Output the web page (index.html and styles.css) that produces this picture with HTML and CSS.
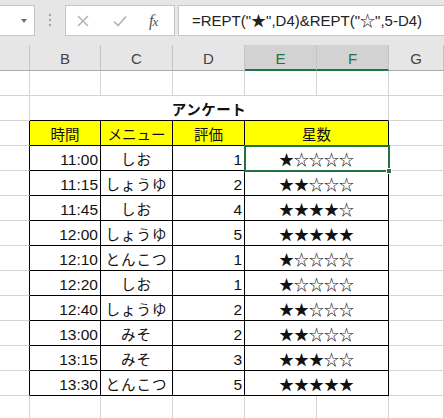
FILE: index.html
```html
<!DOCTYPE html>
<html>
<head>
    <title>アンケート集計</title>
    <link rel="stylesheet" href="styles.css">
</head>
<body>
    <div class="bar">
        <div class="name-box"><span class="caret"></span></div>
        <svg class="grip" width="4" height="14" viewBox="0 0 4 14">
            <circle cx="2" cy="2" r="1.2"/><circle cx="2" cy="7" r="1.2"/><circle cx="2" cy="12" r="1.2"/>
        </svg>
        <div class="fx-box">
            <svg class="ico" width="14" height="14" viewBox="0 0 14 14">
                <path d="M2 2 L12 12 M12 2 L2 12"/>
            </svg>
            <svg class="ico" width="16" height="14" viewBox="0 0 16 14">
                <path d="M2 7.5 L6 11.5 L14 2.5"/>
            </svg>
            <span class="fx">f<i>x</i></span>
        </div>
        <div class="formula">=REPT("★",D4)&amp;REPT("☆",5-D4)</div>
    </div>

    <div class="sheet">
        <!-- column headers -->
        <div class="hd"></div>
        <div class="hd">B</div>
        <div class="hd">C</div>
        <div class="hd">D</div>
        <div class="hd sel">E</div>
        <div class="hd sel">F</div>
        <div class="hd">G</div>

        <!-- row 1 -->
        <div class="c"></div><div class="c"></div><div class="c"></div><div class="c"></div>
        <div class="c"></div><div class="c"></div><div class="c"></div>

        <!-- row 2: title -->
        <div class="c"></div>
        <div class="c title">アンケート</div>
        <div class="c"></div>

        <!-- row 3: table head -->
        <div class="c edge"></div>
        <div class="c t head">時間</div>
        <div class="c t head">メニュー</div>
        <div class="c t head">評価</div>
        <div class="c t head wide">星数</div>
        <div class="c"></div>

        <div class="c edge"></div>
        <div class="c t num">11:00</div><div class="c t mid">しお</div><div class="c t num">1</div>
        <div class="c t wide stars active">★☆☆☆☆<span class="handle"></span></div>
        <div class="c"></div>

        <div class="c edge"></div>
        <div class="c t num">11:15</div><div class="c t mid">しょうゆ</div><div class="c t num">2</div>
        <div class="c t wide stars">★★☆☆☆</div>
        <div class="c"></div>

        <div class="c edge"></div>
        <div class="c t num">11:45</div><div class="c t mid">しお</div><div class="c t num">4</div>
        <div class="c t wide stars">★★★★☆</div>
        <div class="c"></div>

        <div class="c edge"></div>
        <div class="c t num">12:00</div><div class="c t mid">しょうゆ</div><div class="c t num">5</div>
        <div class="c t wide stars">★★★★★</div>
        <div class="c"></div>

        <div class="c edge"></div>
        <div class="c t num">12:10</div><div class="c t mid">とんこつ</div><div class="c t num">1</div>
        <div class="c t wide stars">★☆☆☆☆</div>
        <div class="c"></div>

        <div class="c edge"></div>
        <div class="c t num">12:20</div><div class="c t mid">しお</div><div class="c t num">1</div>
        <div class="c t wide stars">★☆☆☆☆</div>
        <div class="c"></div>

        <div class="c edge"></div>
        <div class="c t num">12:40</div><div class="c t mid">しょうゆ</div><div class="c t num">2</div>
        <div class="c t wide stars">★★☆☆☆</div>
        <div class="c"></div>

        <div class="c edge"></div>
        <div class="c t num">13:00</div><div class="c t mid">みそ</div><div class="c t num">2</div>
        <div class="c t wide stars">★★☆☆☆</div>
        <div class="c"></div>

        <div class="c edge"></div>
        <div class="c t num">13:15</div><div class="c t mid">みそ</div><div class="c t num">3</div>
        <div class="c t wide stars">★★★☆☆</div>
        <div class="c"></div>

        <div class="c edge"></div>
        <div class="c t num">13:30</div><div class="c t mid">とんこつ</div><div class="c t num">5</div>
        <div class="c t wide stars">★★★★★</div>
        <div class="c"></div>

        <!-- row 14 -->
        <div class="c"></div><div class="c"></div><div class="c"></div><div class="c"></div>
        <div class="c"></div><div class="c"></div><div class="c"></div>
    </div>
</body>
</html>
```

FILE: styles.css
```css
* { box-sizing: border-box; }
body { margin: 0; background: #fff; font-family: "Liberation Sans", "Noto Sans CJK JP", sans-serif; overflow: hidden; }

/* formula bar */
.bar { display: flex; align-items: flex-start; height: 45px; padding-top: 5px; background: #e6e6e6; }
.name-box { position: relative; width: 35px; height: 31px; background: #fff; border: 1px solid #c6c6c6; border-left: none; }
.caret { position: absolute; left: 21px; top: 13px; border-left: 3.5px solid transparent; border-right: 3.5px solid transparent; border-top: 4px solid #707070; }
.grip { margin: 8px 0 0 13px; fill: #a8a8a8; }
.fx-box { display: flex; align-items: center; width: 110px; height: 31px; margin-left: 13px; background: #fff; border: 1px solid #c6c6c6; }
.ico { fill: none; stroke: #b4b4b4; stroke-width: 1.6; }
.fx-box .ico:first-child { margin-left: 10px; }
.fx-box .ico + .ico { margin-left: 22px; }
.fx { margin-left: 21px; font-family: "Liberation Serif", serif; font-style: italic; font-size: 16px; color: #555; letter-spacing: -1px; }
.fx i { font-size: 13px; }
.formula { flex: 1; height: 31px; margin-left: 3px; padding-left: 13px; background: #fff; border: 1px solid #c6c6c6; border-right: none; font-size: 15px; line-height: 29px; color: #222; white-space: nowrap; }

/* grid */
.sheet { display: grid; grid-template-columns: 30px 71px 72px 72px 72px 72px 1fr; grid-auto-rows: 25px; grid-template-rows: 26px; }
.hd { display: flex; align-items: center; justify-content: center; padding-top: 2px; background: #e6e6e6; border-right: 1px solid #c4c4c4; border-bottom: 1px solid #ababab; font-size: 15px; color: #444; }
.hd.sel { background: #d2d2d2; color: #217346; border-bottom: 2px solid #217346; padding-top: 3px; }

.c { display: flex; align-items: center; padding: 1px 2px 0; border-right: 1px solid #d4d4d4; border-bottom: 1px solid #d4d4d4; font-family: "Noto Sans CJK JP", sans-serif; font-size: 14.5px; color: #111; white-space: nowrap; }
.t { border-right-color: #000; border-bottom-color: #000; }
.edge { border-right-color: #000; }
.title { grid-column: span 5; justify-content: center; border-bottom-color: #000; font-weight: bold; letter-spacing: 0.5px; }
.head { justify-content: center; background: #ffff00; }
.wide { grid-column: span 2; }
.num { justify-content: flex-end; padding-top: 3px; font-family: "Liberation Sans", sans-serif; font-size: 15.5px; }
.mid { justify-content: center; letter-spacing: 1px; }
.stars { justify-content: center; font-size: 15px; }

/* active cell */
.active { position: relative; outline: 2px solid #217346; outline-offset: -1px; }
.handle { position: absolute; right: -4px; bottom: -4px; width: 6px; height: 6px; background: #217346; border: 1px solid #fff; }
```
